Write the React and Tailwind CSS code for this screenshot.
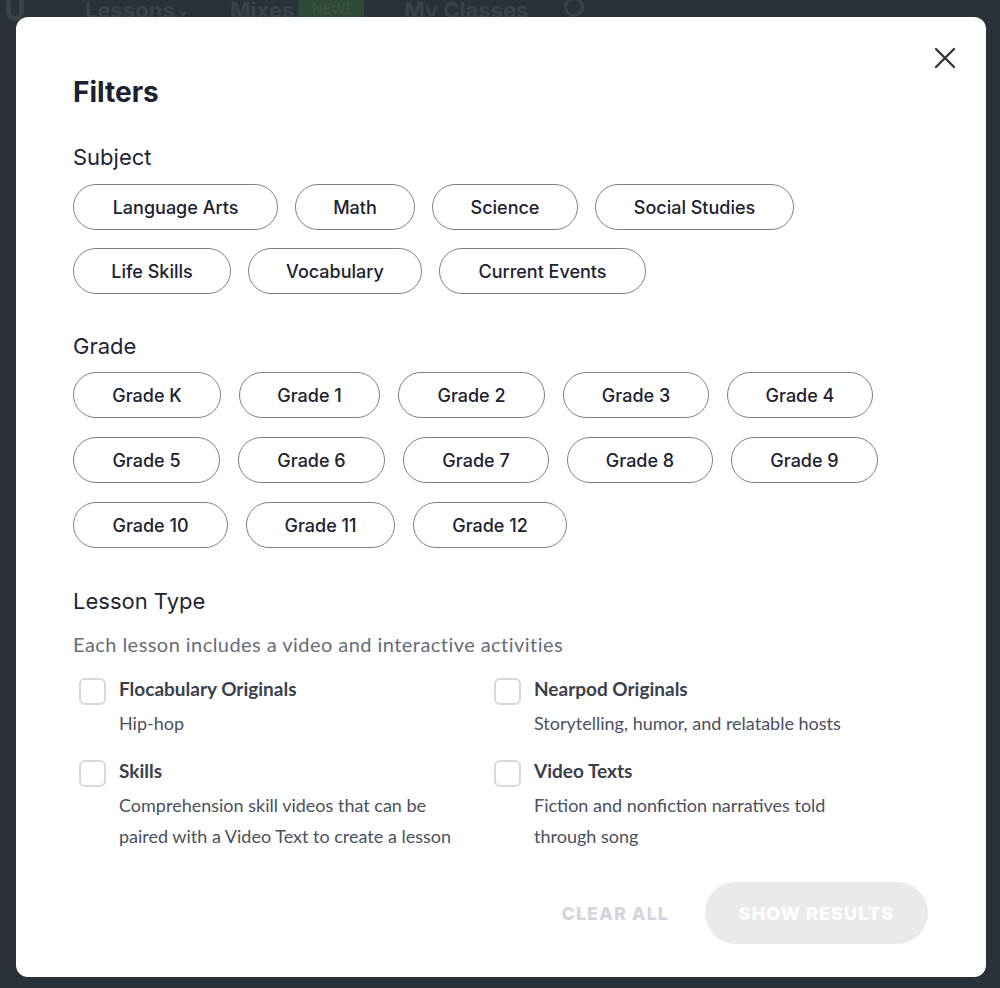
import React from "react";

const subjects = [
  { t: "Language Arts", w: "w-[205px]" },
  { t: "Math", w: "w-[120px]" },
  { t: "Science", w: "w-[146px]" },
  { t: "Social Studies", w: "w-[199px]" },
  { t: "Life Skills", w: "w-[158px]" },
  { t: "Vocabulary", w: "w-[174px]" },
  { t: "Current Events", w: "w-[207px]" },
];

const grades = [
  { t: "Grade K", w: "w-[148px]" },
  { t: "Grade 1", w: "w-[141px]" },
  { t: "Grade 2", w: "w-[147px]" },
  { t: "Grade 3", w: "w-[146px]" },
  { t: "Grade 4", w: "w-[146px]" },
  { t: "Grade 5", w: "w-[147px]" },
  { t: "Grade 6", w: "w-[147px]" },
  { t: "Grade 7", w: "w-[146px]" },
  { t: "Grade 8", w: "w-[146px]" },
  { t: "Grade 9", w: "w-[147px]" },
  { t: "Grade 10", w: "w-[155px]" },
  { t: "Grade 11", w: "w-[149px]" },
  { t: "Grade 12", w: "w-[154px]" },
];

const types = [
  { t: "Flocabulary Originals", d: ["Hip-hop"] },
  { t: "Nearpod Originals", d: ["Storytelling, humor, and relatable hosts"] },
  { t: "Skills", d: ["Comprehension skill videos that can be", "paired with a Video Text to create a lesson"] },
  { t: "Video Texts", d: ["Fiction and nonfiction narratives told", "through song"] },
];

const head = { fontFamily: "Inter, 'Noto Sans', sans-serif" };
const body = { fontFamily: "Lato, 'Noto Sans', sans-serif" };

function Chip({ t, w }) {
  return (
    <button
      className={`${w} h-[46px] rounded-full border border-[#7d7f85] bg-white text-[18px] font-medium text-[#1d2130] flex items-center justify-center`}
      style={head}
    >
      {t}
    </button>
  );
}

function Check({ t, d }) {
  return (
    <div className="flex">
      <div className="ml-[6px] mt-[2px] w-[27px] h-[27px] rounded-[6px] border-2 border-[#d5d8de] bg-white shrink-0" />
      <div className="ml-[13px]">
        <div className="text-[19px] leading-[26px] font-bold text-[#3b404c]" style={body}>{t}</div>
        <div className="mt-[6px] text-[18px] leading-[31px] text-[#4b505c]" style={body}>
          {d.map((l) => (
            <div key={l}>{l}</div>
          ))}
        </div>
      </div>
    </div>
  );
}

export default function App() {
  return (
    <div className="relative w-[1000px] h-[988px] overflow-hidden bg-[#2b3138]">
      {/* background page (dimmed) */}
      <div className="flex items-start h-[18px] -mt-[3px] text-[22px] font-bold text-[#3c424a]" style={head}>
        <div className="ml-[6px] w-[18px] h-[24px] rounded-b-[9px] border-[5px] border-t-0 border-[#3c424a]" />
        <div className="ml-[61px] leading-[26px]">Lessons <span className="text-[12px]">▾</span></div>
        <div className="ml-[44px] leading-[26px]">Mixes</div>
        <div className="ml-[4px] mt-[2px] h-[20px] w-[66px] text-center rounded-[4px] bg-[#2e4a36] text-[14px] leading-[20px] text-[#3a5240]">NEW!</div>
        <div className="ml-[40px] leading-[26px]">My Classes</div>
        <div className="ml-[36px] w-[20px] h-[20px] rounded-full border-[3px] border-[#3c424a]" />
      </div>

      {/* modal */}
      <div className="absolute left-[16px] top-[17px] w-[970px] h-[960px] rounded-[12px] bg-white px-[57px] pt-[58px]">
        <button className="absolute right-[28px] top-[28px] w-[26px] h-[26px] flex items-center justify-center" aria-label="Close">
          <svg width="22" height="22" viewBox="0 0 22 22" fill="none" stroke="#363636" strokeWidth="2.4" strokeLinecap="round">
            <line x1="2" y1="2" x2="20" y2="20" />
            <line x1="20" y1="2" x2="2" y2="20" />
          </svg>
        </button>

        <h1 className="text-[28px] leading-[34px] font-bold text-[#1c2230]" style={head}>Filters</h1>

        <h2 className="mt-[34px] text-[22px] leading-[28px] text-[#1f2533]" style={head}>Subject</h2>
        <div className="mt-[13px] flex flex-wrap gap-x-[17px] gap-y-[18px]">
          {subjects.map((s) => (
            <Chip key={s.t} {...s} />
          ))}
        </div>

        <h2 className="mt-[38px] text-[22px] leading-[28px] text-[#1f2533]" style={head}>Grade</h2>
        <div className="mt-[12px] flex flex-wrap gap-x-[18px] gap-y-[19px] w-[820px]">
          {grades.map((s) => (
            <Chip key={s.t} {...s} />
          ))}
        </div>

        <h2 className="mt-[39px] text-[22px] leading-[28px] text-[#1f2533]" style={head}>Lesson Type</h2>
        <p className="mt-[16px] text-[20px] leading-[26px] tracking-[0.45px] text-[#676c79]" style={body}>
          Each lesson includes a video and interactive activities
        </p>
        <div className="mt-[19px] grid grid-cols-[415px_1fr] gap-y-[19px]">
          {types.map((c) => (
            <Check key={c.t} {...c} />
          ))}
        </div>

        <div className="mt-[30px] flex items-center justify-end gap-[36px] pr-[1px]">
          <button className="text-[18px] font-extrabold tracking-[1px] text-[#d3d6dc]" style={head}>CLEAR ALL</button>
          <button className="h-[62px] w-[223px] rounded-full bg-[#e9eaec] text-[18px] font-extrabold tracking-[1.1px] text-white" style={head}>
            SHOW RESULTS
          </button>
        </div>
      </div>
    </div>
  );
}
